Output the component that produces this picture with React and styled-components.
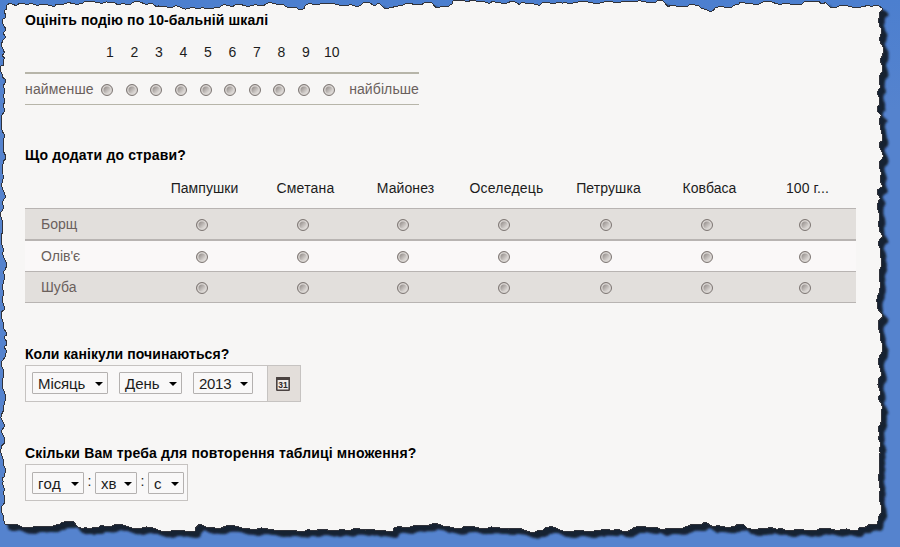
import React, { useState } from 'react';
import styled, { createGlobalStyle } from 'styled-components';

const GlobalStyle = createGlobalStyle`
  * {
    box-sizing: border-box;
  }
  body {
    margin: 0;
    background: #5582cd;
    font-family: "Liberation Sans", Arial, sans-serif;
    overflow: hidden;
  }
`;

const Page = styled.div`
  position: relative;
  width: 900px;
  height: 547px;
  overflow: hidden;
`;

const PaperSvg = styled.svg`
  position: absolute;
  inset: 0;
`;

const Form = styled.main`
  position: relative;
  display: flex;
  flex-direction: column;
  padding: 11px 0 0 25px;
`;

const Question = styled.section`
  display: flex;
  flex-direction: column;
  align-items: flex-start;
  height: ${(p) => p.$height}px;
`;

const Title = styled.h2`
  margin: 0;
  height: 18px;
  font-size: 14px;
  line-height: 18px;
  font-weight: bold;
  color: #000;
  white-space: nowrap;
  letter-spacing: ${(p) => p.$spacing || 0}px;
`;

// Scale question
const ScaleNumbers = styled.div`
  display: grid;
  grid-template-columns: repeat(9, 24.5px) 27px;
  margin-left: 72.7px;
  height: 43px;
  padding-top: 14px;
  font-size: 14px;
  line-height: 18px;
  text-align: center;
  color: #1c1c1c;
`;

const ScaleRow = styled.div`
  display: grid;
  grid-template-columns: 69.7px repeat(10, 24.65px) 1fr;
  align-items: center;
  justify-items: center;
  width: 394px;
  height: 33px;
  border-top: 2px solid #b7b5a9;
  border-bottom: 1px solid #b7b5a9;
`;

const ScaleLabel = styled.span`
  justify-self: ${(p) => p.$side};
  font-size: 14px;
  line-height: 18px;
  color: #6a605c;
  letter-spacing: ${(p) => p.$spacing}px;
`;

const Radio = styled.button`
  width: 12px;
  height: 12px;
  margin-top: 2px;
  padding: 0;
  border: 1px solid #7d7673;
  border-radius: 50%;
  background: ${(p) =>
    p.$checked
      ? 'radial-gradient(circle, #333 0 2px, #eee 3px)'
      : 'linear-gradient(135deg, #9b9592 25%, #dedad7 75%)'};
  box-shadow: inset 0 0 0 1.5px #d9d5d2;
`;

// Grid question
const gridColumns = '126.5px 101px 101px 99px 103px 101px 101px 95px';

const GridHead = styled.div`
  display: grid;
  grid-template-columns: ${gridColumns};
  width: 831px;
  height: 44px;
  padding: 15px 0 0 2px;
  font-size: 14px;
  line-height: 18px;
  text-align: center;
  color: #1c1c1c;
`;

const GridHeadCell = styled.span`
  padding-left: 1px;
  letter-spacing: ${(p) => p.$spacing || 0}px;
`;

const GridRow = styled.div`
  display: grid;
  grid-template-columns: ${gridColumns};
  align-items: center;
  justify-items: center;
  width: 831px;
  height: ${(p) => p.$height}px;
  background: ${(p) => (p.$shaded ? '#e2dfdc' : '#faf8f8')};
  border-bottom: ${(p) => p.$line}px solid #b8b4b2;
  &:nth-of-type(2) {
    border-top: 1px solid #b8b4b2;
  }
`;

const RowLabel = styled.span`
  justify-self: start;
  padding-left: 16px;
  font-size: 14px;
  line-height: 18px;
  color: #6a605c;
`;

// Date and time questions
const Fields = styled.div`
  display: flex;
  align-items: flex-start;
  width: ${(p) => p.$width}px;
  height: 37px;
  margin-top: 2px;
  padding-left: 6px;
  border: 1px solid #c6c3c1;
  background: #f9f8f8;
`;

const Select = styled.button`
  display: flex;
  align-items: center;
  justify-content: space-between;
  width: ${(p) => p.$width}px;
  height: 22px;
  margin-top: ${(p) => p.$top || 6}px;
  margin-right: ${(p) => p.$gap || 0}px;
  padding: 2px 4px 0 5px;
  border: 1px solid #b4b1b0;
  border-radius: 1px;
  background: #f9f8f8;
  font-family: inherit;
  font-size: 15px;
  line-height: 18px;
  color: #1c1c1c;
  letter-spacing: ${(p) => p.$spacing || 0}px;
`;

const Caret = styled.i`
  border: 4px solid transparent;
  border-top-color: #000;
  border-bottom-width: 0;
`;

const Colon = styled.span`
  width: 11px;
  margin-top: 8px;
  font-size: 14px;
  line-height: 16px;
  text-align: center;
  color: #222;
`;

const CalendarButton = styled.button`
  display: flex;
  align-items: center;
  justify-content: center;
  width: 33px;
  height: 35px;
  margin-left: auto;
  padding: 1px 2px 0 0;
  border: 0;
  border-left: 1px solid #c6c3c1;
  background: #e3deda;
`;

const TOP = [
  [6, 6], [12, 4], [17, 5], [25, 4], [28, 5], [33, 4], [55, 6], [60, 4], [67, 3], [75, 4], [83, 3], [88, 1],
  [95, 2], [100, 3], [115, 3], [118, 5], [125, 4], [132, 3], [140, 2], [148, 4], [153, 4], [157, 7], [167, 7],
  [175, 6], [182, 8], [200, 9], [217, 7], [223, 5], [230, 6], [240, 5], [250, 6], [257, 5], [262, 6], [272, 3],
  [280, 4], [287, 7], [293, 7], [300, 10], [305, 6], [312, 4], [330, 4], [355, 6], [368, 2], [373, 5], [379, 3],
  [384, 8], [392, 8], [400, 5], [432, 3], [436, 8], [448, 7], [453, 1], [465, 1], [467, 2], [483, 1], [490, 3],
  [515, 2], [520, 4], [532, 3], [540, 5], [548, 2], [555, 4], [565, 2], [572, 4], [580, 1], [590, 3], [600, 3],
  [625, 1], [641, 1], [648, 3], [657, 1], [663, 1], [668, 7], [680, 6], [688, 6], [698, 5], [702, 9], [709, 11],
  [718, 7], [728, 7], [738, 5], [743, 2], [748, 4], [772, 2], [780, 5], [784, 3], [792, 5], [803, 3], [807, 1],
  [819, 1], [821, 4], [825, 2], [830, 7], [843, 6], [855, 7], [864, 7], [867, 5], [873, 6], [879, 6], [882, 8],
];
const RIGHT = [
  [883, 10], [880, 12], [878, 20], [882, 30], [879, 38], [883, 47], [881, 58], [882, 65], [882, 72], [879, 82],
  [880, 88], [878, 95], [880, 105], [877, 111], [882, 116], [879, 122], [881, 130], [883, 138], [879, 145],
  [883, 157], [879, 165], [881, 175], [880, 180], [882, 187], [877, 193], [880, 199], [878, 210], [880, 220],
  [879, 230], [883, 237], [878, 244], [881, 252], [881, 262], [880, 275], [879, 290], [877, 308], [883, 315],
  [878, 325], [880, 338], [883, 345], [880, 355], [879, 365], [881, 376], [878, 385], [880, 395], [879, 400],
  [883, 408], [881, 417], [880, 425], [878, 438], [881, 446], [879, 455], [880, 465], [878, 476], [880, 483],
  [879, 492], [881, 505], [881, 513], [878, 521],
];
const BOTTOM = [
  [876, 525], [867, 526], [862, 527], [858, 530], [850, 530], [840, 530], [825, 529], [810, 530], [785, 530],
  [770, 527], [762, 529], [755, 530], [747, 528], [743, 524], [735, 526], [713, 527], [705, 522], [697, 525],
  [685, 527], [662, 530], [655, 527], [640, 527], [630, 530], [622, 531], [615, 529], [600, 531], [563, 531],
  [553, 527], [545, 528], [540, 531], [530, 532], [515, 528], [500, 528], [485, 528], [470, 526], [462, 528],
  [445, 527], [433, 523], [420, 526], [410, 527], [397, 527], [393, 531], [377, 531], [367, 529], [345, 530],
  [332, 530], [310, 530], [300, 531], [285, 531], [270, 529], [250, 529], [235, 526], [210, 528], [200, 524],
  [195, 531], [180, 531], [165, 531], [150, 528], [135, 528], [120, 525], [100, 526], [90, 529], [84, 528],
  [78, 527], [73, 521], [60, 524], [45, 526], [30, 528], [20, 526], [15, 524],
];
const LEFT = [
  [5, 524], [4, 518], [2, 513], [3, 505], [5, 490], [2, 478], [6, 470], [3, 462], [1, 450], [5, 440], [2, 433],
  [4, 424], [1, 418], [3, 407], [6, 400], [2, 386], [4, 377], [2, 367], [3, 360], [6, 350], [4, 347], [7, 342],
  [4, 337], [6, 332], [3, 325], [1, 315], [4, 310], [3, 300], [4, 293], [2, 288], [4, 280], [5, 270], [7, 264],
  [3, 255], [2, 245], [2, 230], [2, 220], [1, 212], [3, 205], [5, 198], [3, 190], [2, 180], [3, 170], [3, 161],
  [6, 156], [3, 150], [3, 142], [5, 137], [2, 130], [1, 122], [2, 115], [5, 110], [3, 105], [5, 100], [3, 95],
  [5, 90], [3, 85], [5, 79], [2, 77], [1, 72], [1, 66], [4, 62], [5, 58], [2, 56], [4, 53], [3, 49], [1, 44],
  [3, 40], [6, 37], [3, 33], [6, 29], [4, 26], [2, 22], [3, 19], [6, 15], [4, 11],
];

// Splits every edge segment into short pieces so the paper looks ripped
const roughen = (points) => {
  const result = [];
  points.forEach(([x, y], i) => {
    const [nx, ny] = points[(i + 1) % points.length];
    const steps = Math.max(1, Math.round(Math.hypot(nx - x, ny - y) / 2.5));
    for (let s = 0; s < steps; s += 1) {
      const noise = s === 0 ? 0 : Math.sin((i * 7 + s * 13) * 12.9898);
      result.push([x + ((nx - x) * s) / steps + noise, y + ((ny - y) * s) / steps + noise]);
    }
  });
  return result.map(([x, y]) => `${x.toFixed(1)},${y.toFixed(1)}`).join(' ');
};

const outline = roughen([...TOP, ...RIGHT, ...BOTTOM, ...LEFT]);

const TornPaper = () => (
  <PaperSvg width="900" height="547" viewBox="0 0 900 547">
    <defs>
      <filter id="soft" x="-5%" y="-5%" width="110%" height="110%">
        <feGaussianBlur stdDeviation="1.3" />
      </filter>
      <linearGradient id="blue" x1="0" y1="0" x2="0" y2="1">
        <stop offset="0" stopColor="#4c7fcf" />
        <stop offset="0.2" stopColor="#5583ce" />
        <stop offset="1" stopColor="#5583ce" />
      </linearGradient>
    </defs>
    <rect width="900" height="547" fill="url(#blue)" />
    <polygon points={outline} transform="translate(4.5 5)" fill="#192433" stroke="#192433" strokeWidth="2" filter="url(#soft)" />
    <polygon points={outline} fill="#f7f6f5" stroke="#30323a" shapeRendering="crispEdges" />
  </PaperSvg>
);

const CalendarIcon = () => (
  <svg width="14" height="14" viewBox="0 0 14 14">
    <rect x="0.8" y="0.8" width="12.4" height="12.4" rx="0.5" fill="#efebe8" stroke="#4b4341" strokeWidth="1.6" />
    <rect x="0" y="0" width="14" height="3" rx="0.5" fill="#4b4341" />
    <text x="7" y="10.8" textAnchor="middle" fontSize="8.5" fontWeight="bold" fill="#2d2725">31</text>
  </svg>
);

const numbers = [1, 2, 3, 4, 5, 6, 7, 8, 9, 10];

const toppings = [
  { name: 'Пампушки', spacing: 0.05 },
  { name: 'Сметана', spacing: 0.2 },
  { name: 'Майонез', spacing: 0.1 },
  { name: 'Оселедець', spacing: 0.2 },
  { name: 'Петрушка', spacing: 0.1 },
  { name: 'Ковбаса', spacing: 0.05 },
  { name: '100 г...', spacing: 0.1 },
];

const dishes = [
  { name: 'Борщ', height: 33, line: 2, shaded: true },
  { name: "Олів'є", height: 31, line: 1, shaded: false },
  { name: 'Шуба', height: 31, line: 1, shaded: true },
];

const App = () => {
  const [score, setScore] = useState(null);
  const [answers, setAnswers] = useState({});

  return (
    <Page>
      <GlobalStyle />
      <TornPaper />
      <Form>
        <Question $height={135}>
          <Title $spacing={0.11}>Оцініть подію по 10-бальній шкалі</Title>
          <ScaleNumbers>
            {numbers.map((n) => (
              <span key={n}>{n}</span>
            ))}
          </ScaleNumbers>
          <ScaleRow>
            <ScaleLabel $side="start" $spacing={0.15}>найменше</ScaleLabel>
            {numbers.map((n) => (
              <Radio key={n} aria-label={String(n)} $checked={score === n} onClick={() => setScore(n)} />
            ))}
            <ScaleLabel $side="end" $spacing={0.1}>найбільше</ScaleLabel>
          </ScaleRow>
        </Question>

        <Question $height={199}>
          <Title $spacing={0.14}>Що додати до страви?</Title>
          <GridHead>
            <span />
            {toppings.map((t) => (
              <GridHeadCell key={t.name} $spacing={t.spacing}>{t.name}</GridHeadCell>
            ))}
          </GridHead>
          {dishes.map((dish) => (
            <GridRow key={dish.name} $height={dish.height} $line={dish.line} $shaded={dish.shaded}>
              <RowLabel>{dish.name}</RowLabel>
              {toppings.map((t) => (
                <Radio
                  key={t.name}
                  aria-label={t.name}
                  $checked={answers[dish.name] === t.name}
                  onClick={() => setAnswers({ ...answers, [dish.name]: t.name })}
                />
              ))}
            </GridRow>
          ))}
        </Question>

        <Question $height={99}>
          <Title $spacing={0.07}>Коли канікули починаються?</Title>
          <Fields $width={276}>
            <Select $width={76} $gap={11} $spacing={-0.1}>Місяць<Caret /></Select>
            <Select $width={63} $gap={11}>День<Caret /></Select>
            <Select $width={60} $spacing={-0.3}>2013<Caret /></Select>
            <CalendarButton aria-label="Календар">
              <CalendarIcon />
            </CalendarButton>
          </Fields>
        </Question>

        <Question $height={60}>
          <Title $spacing={0.14}>Скільки Вам треба для повторення таблиці множення?</Title>
          <Fields $width={163}>
            <Select $width={52} $top={7} $spacing={0.4}>год<Caret /></Select>
            <Colon>:</Colon>
            <Select $width={42} $top={7}>хв<Caret /></Select>
            <Colon>:</Colon>
            <Select $width={36} $top={7}>с<Caret /></Select>
          </Fields>
        </Question>
      </Form>
    </Page>
  );
};

export default App;
